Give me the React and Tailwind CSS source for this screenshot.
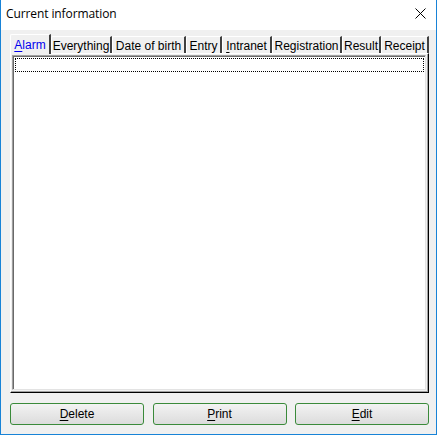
const tabs = [
  { label: 'Alarm', key: 'A', w: 41 },
  { label: 'Everything', w: 61 },
  { label: 'Date of birth', w: 74 },
  { label: 'Entry', w: 36 },
  { label: 'Intranet', key: 'I', w: 50 },
  { label: 'Registration', w: 70 },
  { label: 'Result', w: 39 },
  { label: 'Receipt', w: 48 },
];

function Label({ text, hot }) {
  if (!hot) return <span>{text}</span>;
  const i = text.indexOf(hot);
  return (
    <span>
      {text.slice(0, i)}
      <span className="underline underline-offset-2">{hot}</span>
      {text.slice(i + 1)}
    </span>
  );
}

function WinButton({ text, hot }) {
  return (
    <button className="h-[22px] w-[134px] rounded-[3px] border border-[#3a8a3a] bg-gradient-to-b from-[#f3f3f3] to-[#dcdcdc] text-[12px] leading-none text-black">
      <Label text={text} hot={hot} />
    </button>
  );
}

export default function App() {
  return (
    <div className="w-[437px] h-[435px] flex flex-col border-x border-b border-[#1883d7] bg-[#f0f0f0] font-['Liberation_Sans',Arial,sans-serif] select-none">
      {/* Title bar */}
      <div className="h-[30px] bg-white flex items-center justify-between pl-[5px] pr-[9px] pb-[3px] shrink-0">
        <span className="text-[12px] text-black font-['Open_Sans',sans-serif] tracking-[-0.1px]">Current information</span>
        <svg width="11" height="11" viewBox="0 0 11 11" className="mr-[1px]">
          <path d="M0.5 0.5 L10.5 10.5 M10.5 0.5 L0.5 10.5" stroke="#000" strokeWidth="1" />
        </svg>
      </div>

      <div className="flex-1 pl-[9px] pr-[7px] pt-[4px] flex flex-col">
        {/* Tabs */}
        <div className="flex items-end h-[19px] relative z-10">
          {tabs.map((t, i) => {
            const active = i === 0;
            return (
              <div
                key={t.label}
                style={{ width: t.w }}
                className={
                  active
                    ? 'h-[20px] mb-[-1px] pt-[1px] bg-[#f0f0f0] border-l border-t border-white border-r-2 border-r-[#404040] flex items-center justify-center text-[12px] text-[#0000ee] rounded-tl-[2px]'
                    : 'h-[17px] pt-[1px] bg-[#f0f0f0] border-l border-t border-white border-r-2 border-r-[#404040] flex items-center justify-center text-[12px] text-black rounded-tl-[2px]'
                }
              >
                <Label text={t.label} hot={t.key} />
              </div>
            );
          })}
        </div>

        {/* Tab panel */}
        <div className="h-[340px] border-l border-t border-white border-r border-b border-r-black border-b-black">
          <div className="h-full border-r border-b border-r-[#a0a0a0] border-b-[#a0a0a0] p-[1px]">
            <div className="h-full bg-white border-l border-t border-l-[#a0a0a0] border-t-[#a0a0a0] border-r border-b border-r-[#e3e3e3] border-b-[#e3e3e3]">
              <div className="h-full border-l border-t border-l-[#696969] border-t-[#696969] pt-[1px] px-[1px]">
                <div className="h-[14px] border border-dotted border-black" />
              </div>
            </div>
          </div>
        </div>

        {/* Buttons */}
        <div className="flex justify-between mt-[10px]">
          <WinButton text="Delete" hot="D" />
          <WinButton text="Print" hot="P" />
          <WinButton text="Edit" hot="E" />
        </div>
      </div>
    </div>
  );
}
